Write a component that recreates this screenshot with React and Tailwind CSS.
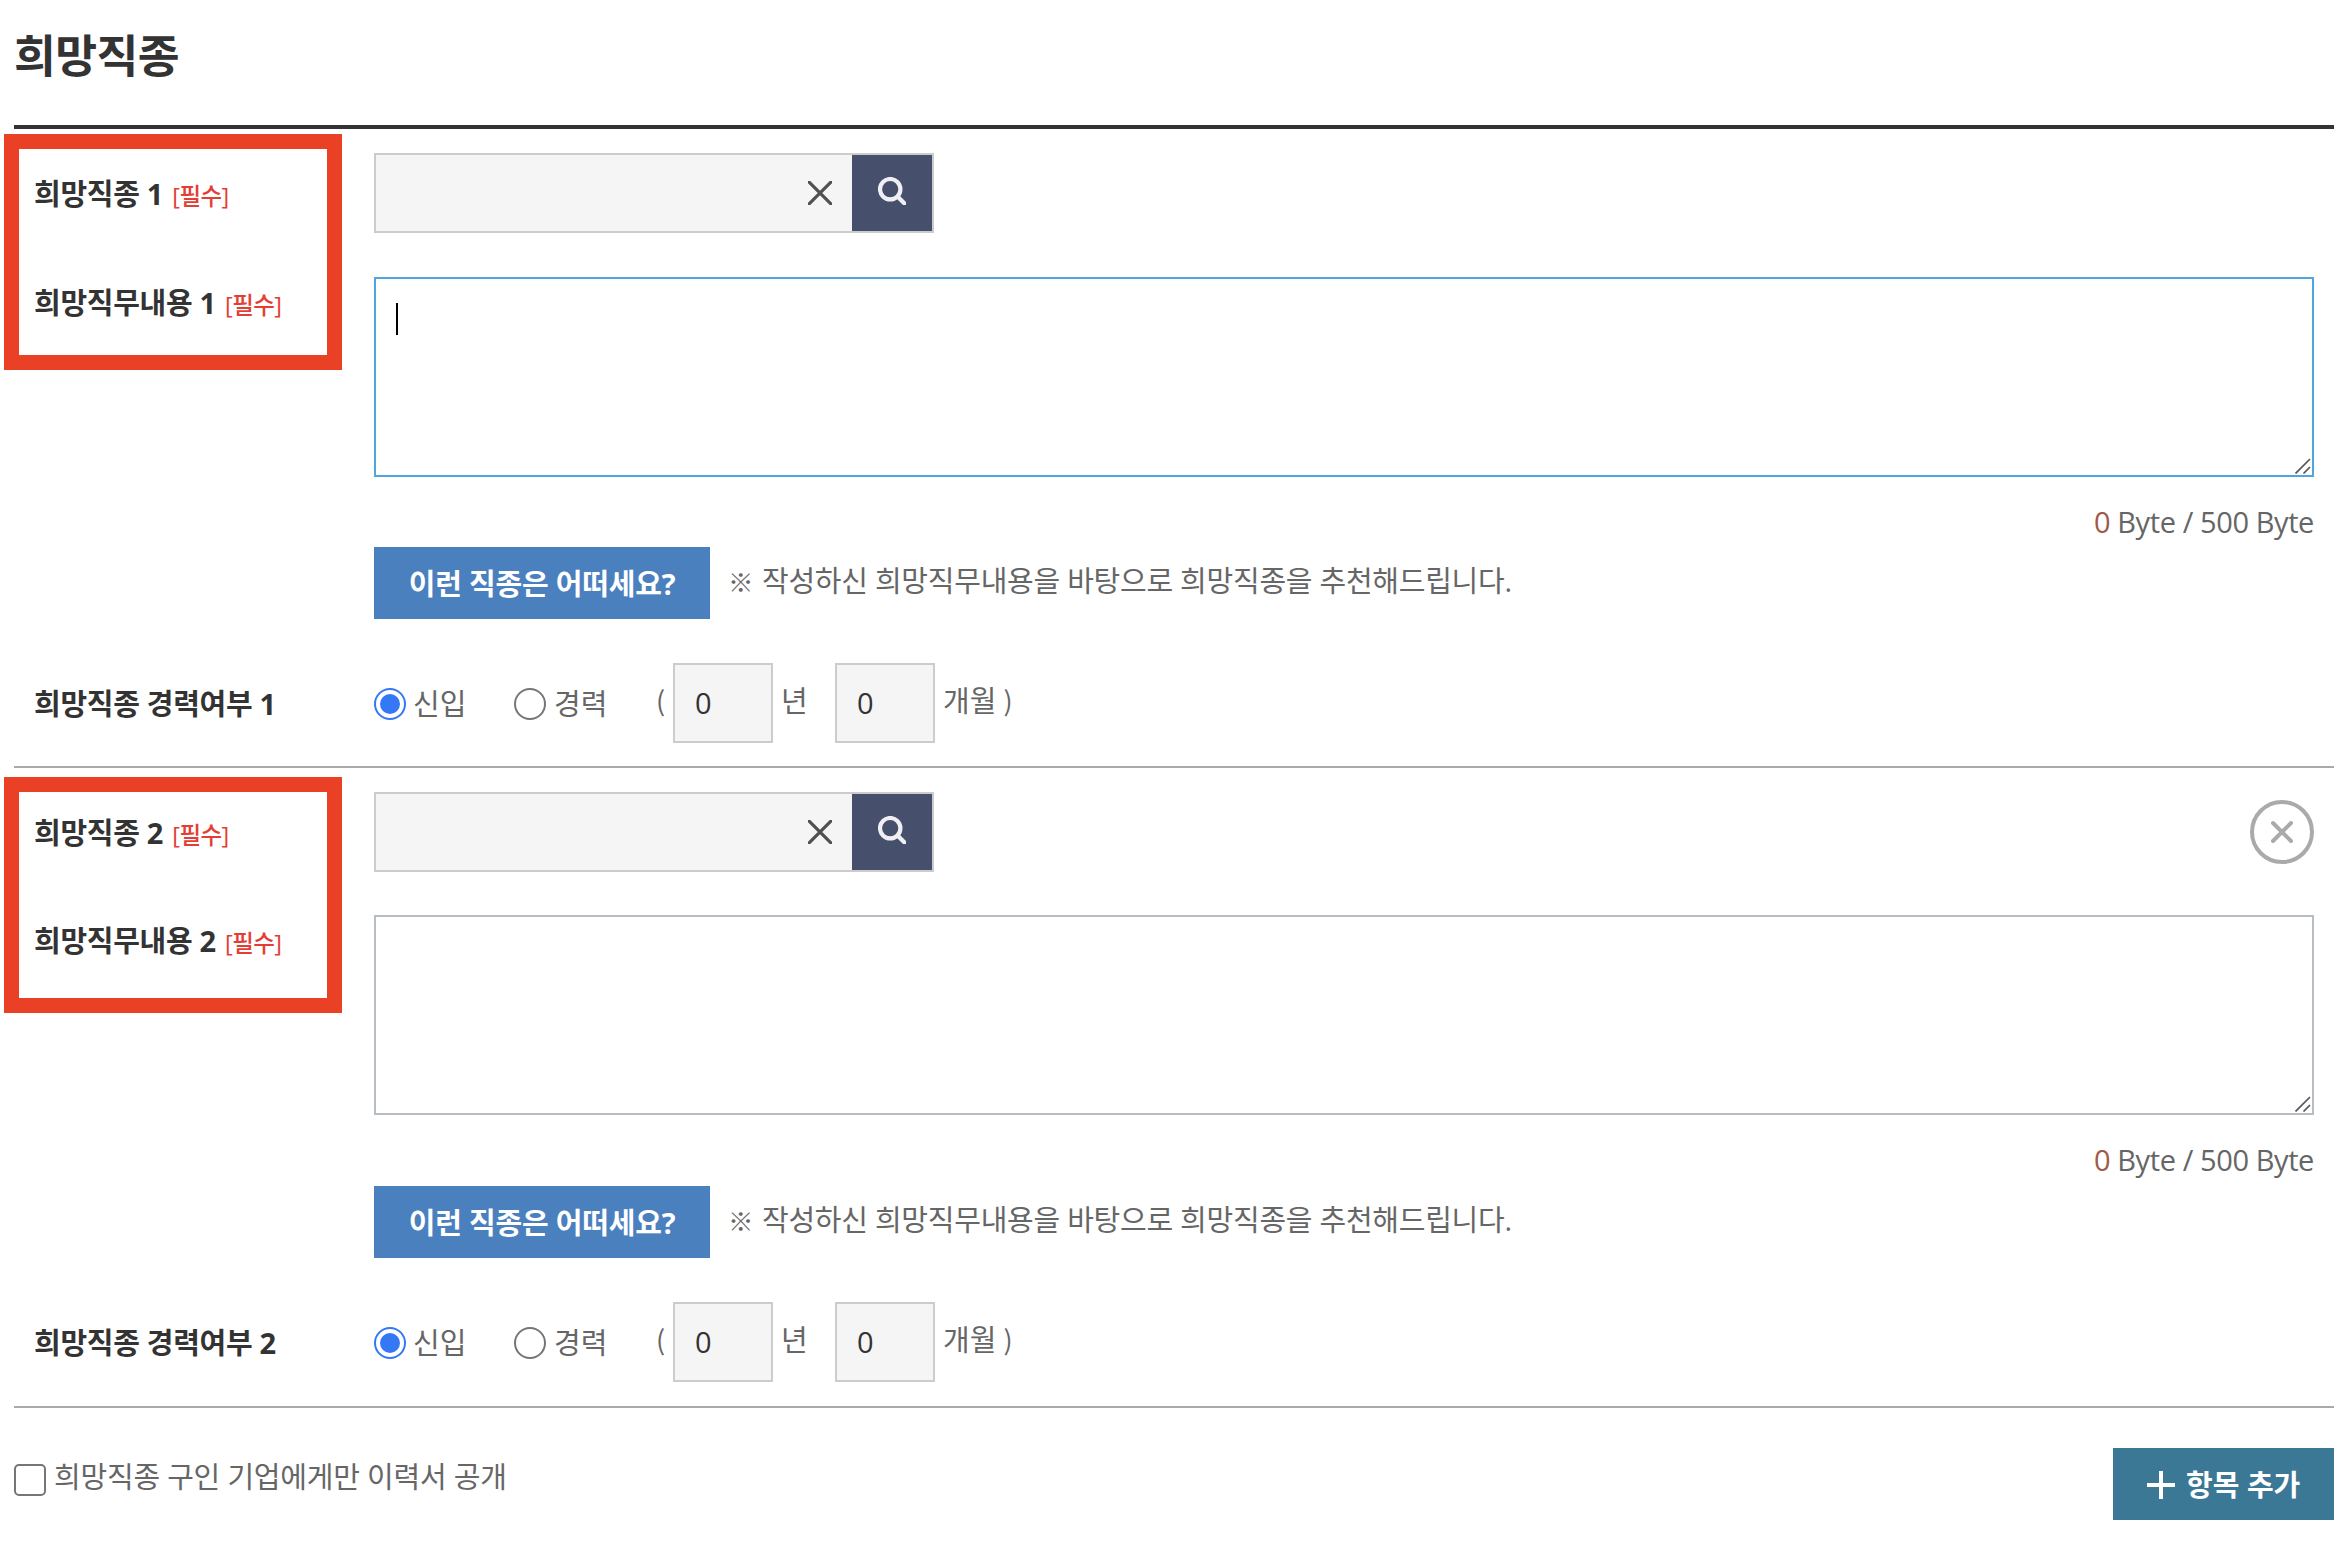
import clsx from 'clsx';

const sections = [
  { no: 1, active: true, removable: false, frame: 'top-[5px]', firstRow: 'h-[148px]', counter: 'h-[70px]', bottom: 'pb-[23px]' },
  { no: 2, active: false, removable: true, frame: 'top-[9px]', firstRow: 'h-[147px]', counter: 'h-[71px]', bottom: 'pb-[24px]' },
];

function Required() {
  return <span className="ml-0.5 text-[23.5px] font-medium tracking-[-0.6px] text-[#e33e35]">[필수]</span>;
}

function Label({ children, className }) {
  return (
    <div className={clsx('w-[360px] shrink-0 pl-5 font-bold leading-10 tracking-[-0.3px] text-[#333]', className)}>
      {children}
    </div>
  );
}

function SearchField() {
  return (
    <div className="mt-6 flex h-20 w-[560px] border-2 border-[#ccc] bg-[#f5f5f5]">
      <div className="flex flex-1 items-center justify-end pr-5">
        <svg width="24" height="24" viewBox="0 0 24 24" stroke="#505050" strokeWidth="3.2">
          <path d="M0 0L24 24M24 0L0 24" />
        </svg>
      </div>
      <button className="flex w-20 items-start bg-[#464f6b] pl-[26px] pt-[22px]">
        <svg width="28" height="28" viewBox="0 0 28 28" fill="none" stroke="#f0f0f4" strokeWidth="4.2">
          <circle cx="12.2" cy="12.2" r="10.2" />
          <path d="M19.5 19.5L28 28" />
        </svg>
      </button>
    </div>
  );
}

function TextArea({ active }) {
  return (
    <div className={clsx('relative h-[200px] w-[1940px] border-2 px-5 py-6', active ? 'border-[#50a5e0]' : 'border-[#b8bdc3]')}>
      {active && <div className="h-8 w-0.5 bg-black" />}
      <svg className="absolute bottom-px right-px" width="16" height="16" viewBox="0 0 16 16" stroke="#555" strokeWidth="1.7">
        <path d="M0.5 15.5L15 1M8.5 15.5L15 9" />
      </svg>
    </div>
  );
}

function Radio({ checked }) {
  return (
    <span
      className={clsx(
        'mt-[25px] flex size-8 shrink-0 items-center justify-center rounded-full border-2',
        checked ? 'border-[#3478f6]' : 'border-[#767676]'
      )}
    >
      {checked && <span className="size-5 rounded-full bg-[#3478f6]" />}
    </span>
  );
}

function NumberInput() {
  return (
    <input
      readOnly
      value="0"
      className="block h-20 w-[100px] shrink-0 border-2 border-[#ccc] bg-[#f5f5f5] px-5 pb-px text-[#333] outline-none"
    />
  );
}

function CareerRow() {
  return (
    <div className="flex h-20 items-start leading-10">
      <div className="flex w-[140px] gap-[7px]">
        <Radio checked />
        <span className="pt-[21px]">신입</span>
      </div>
      <div className="flex w-[142px] gap-2">
        <Radio />
        <span className="pt-[21px]">경력</span>
      </div>
      <span className="w-[17px] pt-[17px] font-['Noto_Sans_CJK_KR',sans-serif] text-[27px] leading-10">(</span>
      <NumberInput />
      <span className="w-[62px] pl-2 pt-[18px]">년</span>
      <NumberInput />
      <span className="pl-2 pt-[18px]">개월</span>
      <span className="pl-[7px] pt-[17px] font-['Noto_Sans_CJK_KR',sans-serif] text-[27px] leading-10">)</span>
    </div>
  );
}

function JobSection({ no, active, removable, frame, firstRow, counter, bottom }) {
  return (
    <section className={clsx('relative border-b-2 border-[#aaa]', bottom)}>
      <div className={clsx('pointer-events-none absolute -left-2.5 h-[236px] w-[338px] border-[15px] border-[#ea4025]', frame)} />

      <div className={clsx('flex items-start', firstRow)}>
        <Label className="pt-[45px]">희망직종 {no} <Required /></Label>
        <SearchField />
        {removable && (
          <button className="ml-auto mr-5 mt-8">
            <svg width="64" height="64" viewBox="0 0 64 64" fill="none" stroke="#aaa" strokeWidth="4">
              <circle cx="32" cy="32" r="30" />
              <path d="M23 23L41 41M41 23L23 41" strokeLinecap="round" />
            </svg>
          </button>
        )}
      </div>

      <div className="flex items-start">
        <Label className="pt-1.5">희망직무내용 {no} <Required /></Label>
        <div className="w-[1940px]">
          <TextArea active={active} />
          <div className={clsx('pt-[24px] text-right leading-[42px] tracking-[-0.4px]', counter)}>
            <span className="text-[#a05a4a]">0</span> Byte / 500 Byte
          </div>
          <div className="flex h-[72px] items-start">
            <button className="h-[72px] w-[336px] bg-[#4b80be] pt-0.5 font-bold tracking-[-0.2px] text-white">이런 직종은 어떠세요?</button>
            <p className="flex pl-[18px] pt-3.5 leading-10">
              <span className="w-[34px] pt-px font-['Noto_Sans_CJK_KR',sans-serif] text-[25.5px] leading-[37px]">※</span>
              <span className="tracking-[-0.26px]">작성하신 희망직무내용을 바탕으로 희망직종을 추천해드립니다.</span>
            </p>
          </div>
        </div>
      </div>

      <div className="mt-11 flex items-start">
        <Label className="pt-[21px]">희망직종 경력여부 {no}</Label>
        <CareerRow />
      </div>
    </section>
  );
}

export default function App() {
  return (
    <div className="min-h-[1560px] w-[2346px] bg-white pl-3.5 font-['Open_Sans','Noto_Sans_CJK_KR',sans-serif] text-[29px] text-[#666]">
      <main className="w-[2320px]">
        <h1 className="h-[129px] border-b-4 border-[#333] pt-[26px] text-[45.5px] font-bold leading-[59px] tracking-[-0.6px] text-[#333]">
          희망직종
        </h1>

        {sections.map((s) => (
          <JobSection key={s.no} {...s} />
        ))}

        <div className="flex items-start justify-between">
          <label className="flex items-start gap-2">
            <span className="mt-14 size-8 rounded-[5px] border-2 border-[#767676]" />
            <span className="pt-[49px] leading-10 tracking-[-0.22px]">희망직종 구인 기업에게만 이력서 공개</span>
          </label>
          <button className="mt-10 flex h-[72px] w-[221px] items-center gap-[11px] bg-[#3b7896] pl-[34px] pt-0.5 font-bold text-white">
            <svg width="28" height="28" viewBox="0 0 28 28" stroke="currentColor" strokeWidth="4">
              <path d="M14 0V28M0 14H28" />
            </svg>
            <span className="whitespace-nowrap">항목 추가</span>
          </button>
        </div>
      </main>
    </div>
  );
}
